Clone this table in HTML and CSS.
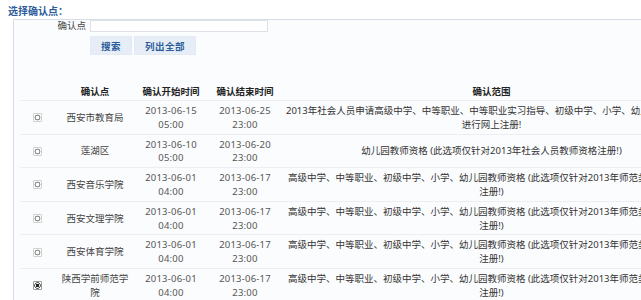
FILE: index.html
```html
<!DOCTYPE html>
<html>
<head>
  <meta charset="UTF-8">
  <link rel="stylesheet" href="styles.css">
</head>
<body>
  <div class="page-title">选择确认点：</div>

  <div class="panel">
    <form class="search-form">
      <label for="pointName">确认点</label>
      <input type="text" id="pointName">
      <div class="form-buttons">
        <button type="button" class="btn">搜索</button>
        <button type="button" class="btn">列出全部</button>
      </div>
    </form>

    <table class="point-table">
      <colgroup>
        <col class="col-radio">
        <col class="col-name">
        <col class="col-start">
        <col class="col-end">
        <col class="col-range">
      </colgroup>
      <thead>
        <tr>
          <th></th>
          <th>确认点</th>
          <th>确认开始时间</th>
          <th>确认结束时间</th>
          <th>确认范围</th>
        </tr>
      </thead>
      <tbody>
        <tr>
          <td><input type="radio" name="point" class="radio"></td>
          <td>西安市教育局</td>
          <td class="date">2013-06-15<br>05:00</td>
          <td class="date">2013-06-25<br>23:00</td>
          <td class="range">2013年社会人员申请高级中学、中等职业、中等职业实习指导、初级中学、小学、幼儿园教师资格的<br>进行网上注册!</td>
        </tr>
        <tr>
          <td><input type="radio" name="point" class="radio"></td>
          <td>莲湖区</td>
          <td class="date">2013-06-10<br>05:00</td>
          <td class="date">2013-06-20<br>23:00</td>
          <td class="range">幼儿园教师资格 (此选项仅针对2013年社会人员教师资格注册!)</td>
        </tr>
        <tr>
          <td><input type="radio" name="point" class="radio"></td>
          <td>西安音乐学院</td>
          <td class="date">2013-06-01<br>04:00</td>
          <td class="date">2013-06-17<br>23:00</td>
          <td class="range">高级中学、中等职业、初级中学、小学、幼儿园教师资格 (此选项仅针对2013年师范类应届毕业生<br>注册!)</td>
        </tr>
        <tr>
          <td><input type="radio" name="point" class="radio"></td>
          <td>西安文理学院</td>
          <td class="date">2013-06-01<br>04:00</td>
          <td class="date">2013-06-17<br>23:00</td>
          <td class="range">高级中学、中等职业、初级中学、小学、幼儿园教师资格 (此选项仅针对2013年师范类应届毕业生<br>注册!)</td>
        </tr>
        <tr>
          <td><input type="radio" name="point" class="radio"></td>
          <td>西安体育学院</td>
          <td class="date">2013-06-01<br>04:00</td>
          <td class="date">2013-06-17<br>23:00</td>
          <td class="range">高级中学、中等职业、初级中学、小学、幼儿园教师资格 (此选项仅针对2013年师范类应届毕业生<br>注册!)</td>
        </tr>
        <tr>
          <td><input type="radio" name="point" class="radio" checked></td>
          <td>陕西学前师范学院</td>
          <td class="date">2013-06-01<br>04:00</td>
          <td class="date">2013-06-17<br>23:00</td>
          <td class="range">高级中学、中等职业、初级中学、小学、幼儿园教师资格 (此选项仅针对2013年师范类应届毕业生<br>注册!)</td>
        </tr>
      </tbody>
    </table>
  </div>
</body>
</html>
```

FILE: styles.css
```css
:root {
  --title-blue: #2c5c9a;
  --line-color: #d6dde6;
  --row-line: #eceef1;
  --panel-bg: #fbfcfd;
  --text-main: #333;
}

html {
  overflow: hidden;
}

body {
  margin: 0;
  padding: 4px 0 0 8px;
  font-family: "Noto Sans", "Noto Sans CJK SC", sans-serif;
  font-size: 9.5px;
  color: var(--text-main);
  background: #fff;
}

.page-title {
  font-size: 10px;
  font-weight: 700;
  line-height: 14px;
  color: var(--title-blue);
  margin-bottom: 1px;
}

.panel {
  margin-left: 5px;
  width: 800px;
  min-height: 320px;
  border-top: 1px solid var(--line-color);
  border-left: 1px solid var(--line-color);
  background: var(--panel-bg);
}

/* search form */
.search-form {
  display: grid;
  grid-template-columns: 72px 178px;
  column-gap: 4px;
  row-gap: 4px;
  margin: 0;
}

.search-form label {
  text-align: right;
  line-height: 12px;
  color: #444;
}

.search-form input {
  height: 12px;
  margin: 0;
  padding: 0 2px;
  box-sizing: border-box;
  border: 1px solid #dde2e8;
  background: #fff;
  font: inherit;
}

.form-buttons {
  grid-column: 2;
  display: flex;
  gap: 2px;
}

.btn {
  height: 19px;
  padding: 0 10px;
  border: 1px solid #e4eaf2;
  background: #e6edf6;
  color: var(--title-blue);
  font-family: inherit;
  font-size: 9.5px;
  font-weight: 700;
  letter-spacing: 0.5px;
  cursor: pointer;
}

/* confirmation point list */
.point-table {
  margin: 29px 0 0 6px;
  width: 680px;
  table-layout: fixed;
  border-collapse: collapse;
}

.col-radio { width: 35px; }
.col-name { width: 80px; }
.col-start { width: 72px; }
.col-end { width: 76px; }
.col-range { width: 417px; }

.point-table th {
  height: 16px;
  padding: 0 3px;
  font-weight: 700;
  color: #222;
  line-height: 16px;
  border-bottom: 1px solid var(--row-line);
}

.point-table td {
  padding: 3px 3px 2px;
  line-height: 13.8px;
  text-align: center;
  vertical-align: middle;
  border-bottom: 1px solid var(--row-line);
  color: #444;
}

.point-table td.date {
  color: #555;
  letter-spacing: 0.2px;
}

.point-table td.range {
  white-space: nowrap;
  color: #333;
}

.radio {
  appearance: none;
  -webkit-appearance: none;
  display: block;
  margin: 0 auto;
  width: 9px;
  height: 9px;
  border: 1px solid #d0d0d0;
  border-radius: 1px;
  background: radial-gradient(circle, transparent 1.6px, #8a8a8a 2.1px, #8a8a8a 2.7px, transparent 3.2px), #fff;
}

.radio:checked {
  border-color: #9a9a9a;
  background: radial-gradient(circle, #222 1.5px, transparent 2px, transparent 2.1px, #555 2.5px, #555 3px, transparent 3.5px), #fff;
}
```
